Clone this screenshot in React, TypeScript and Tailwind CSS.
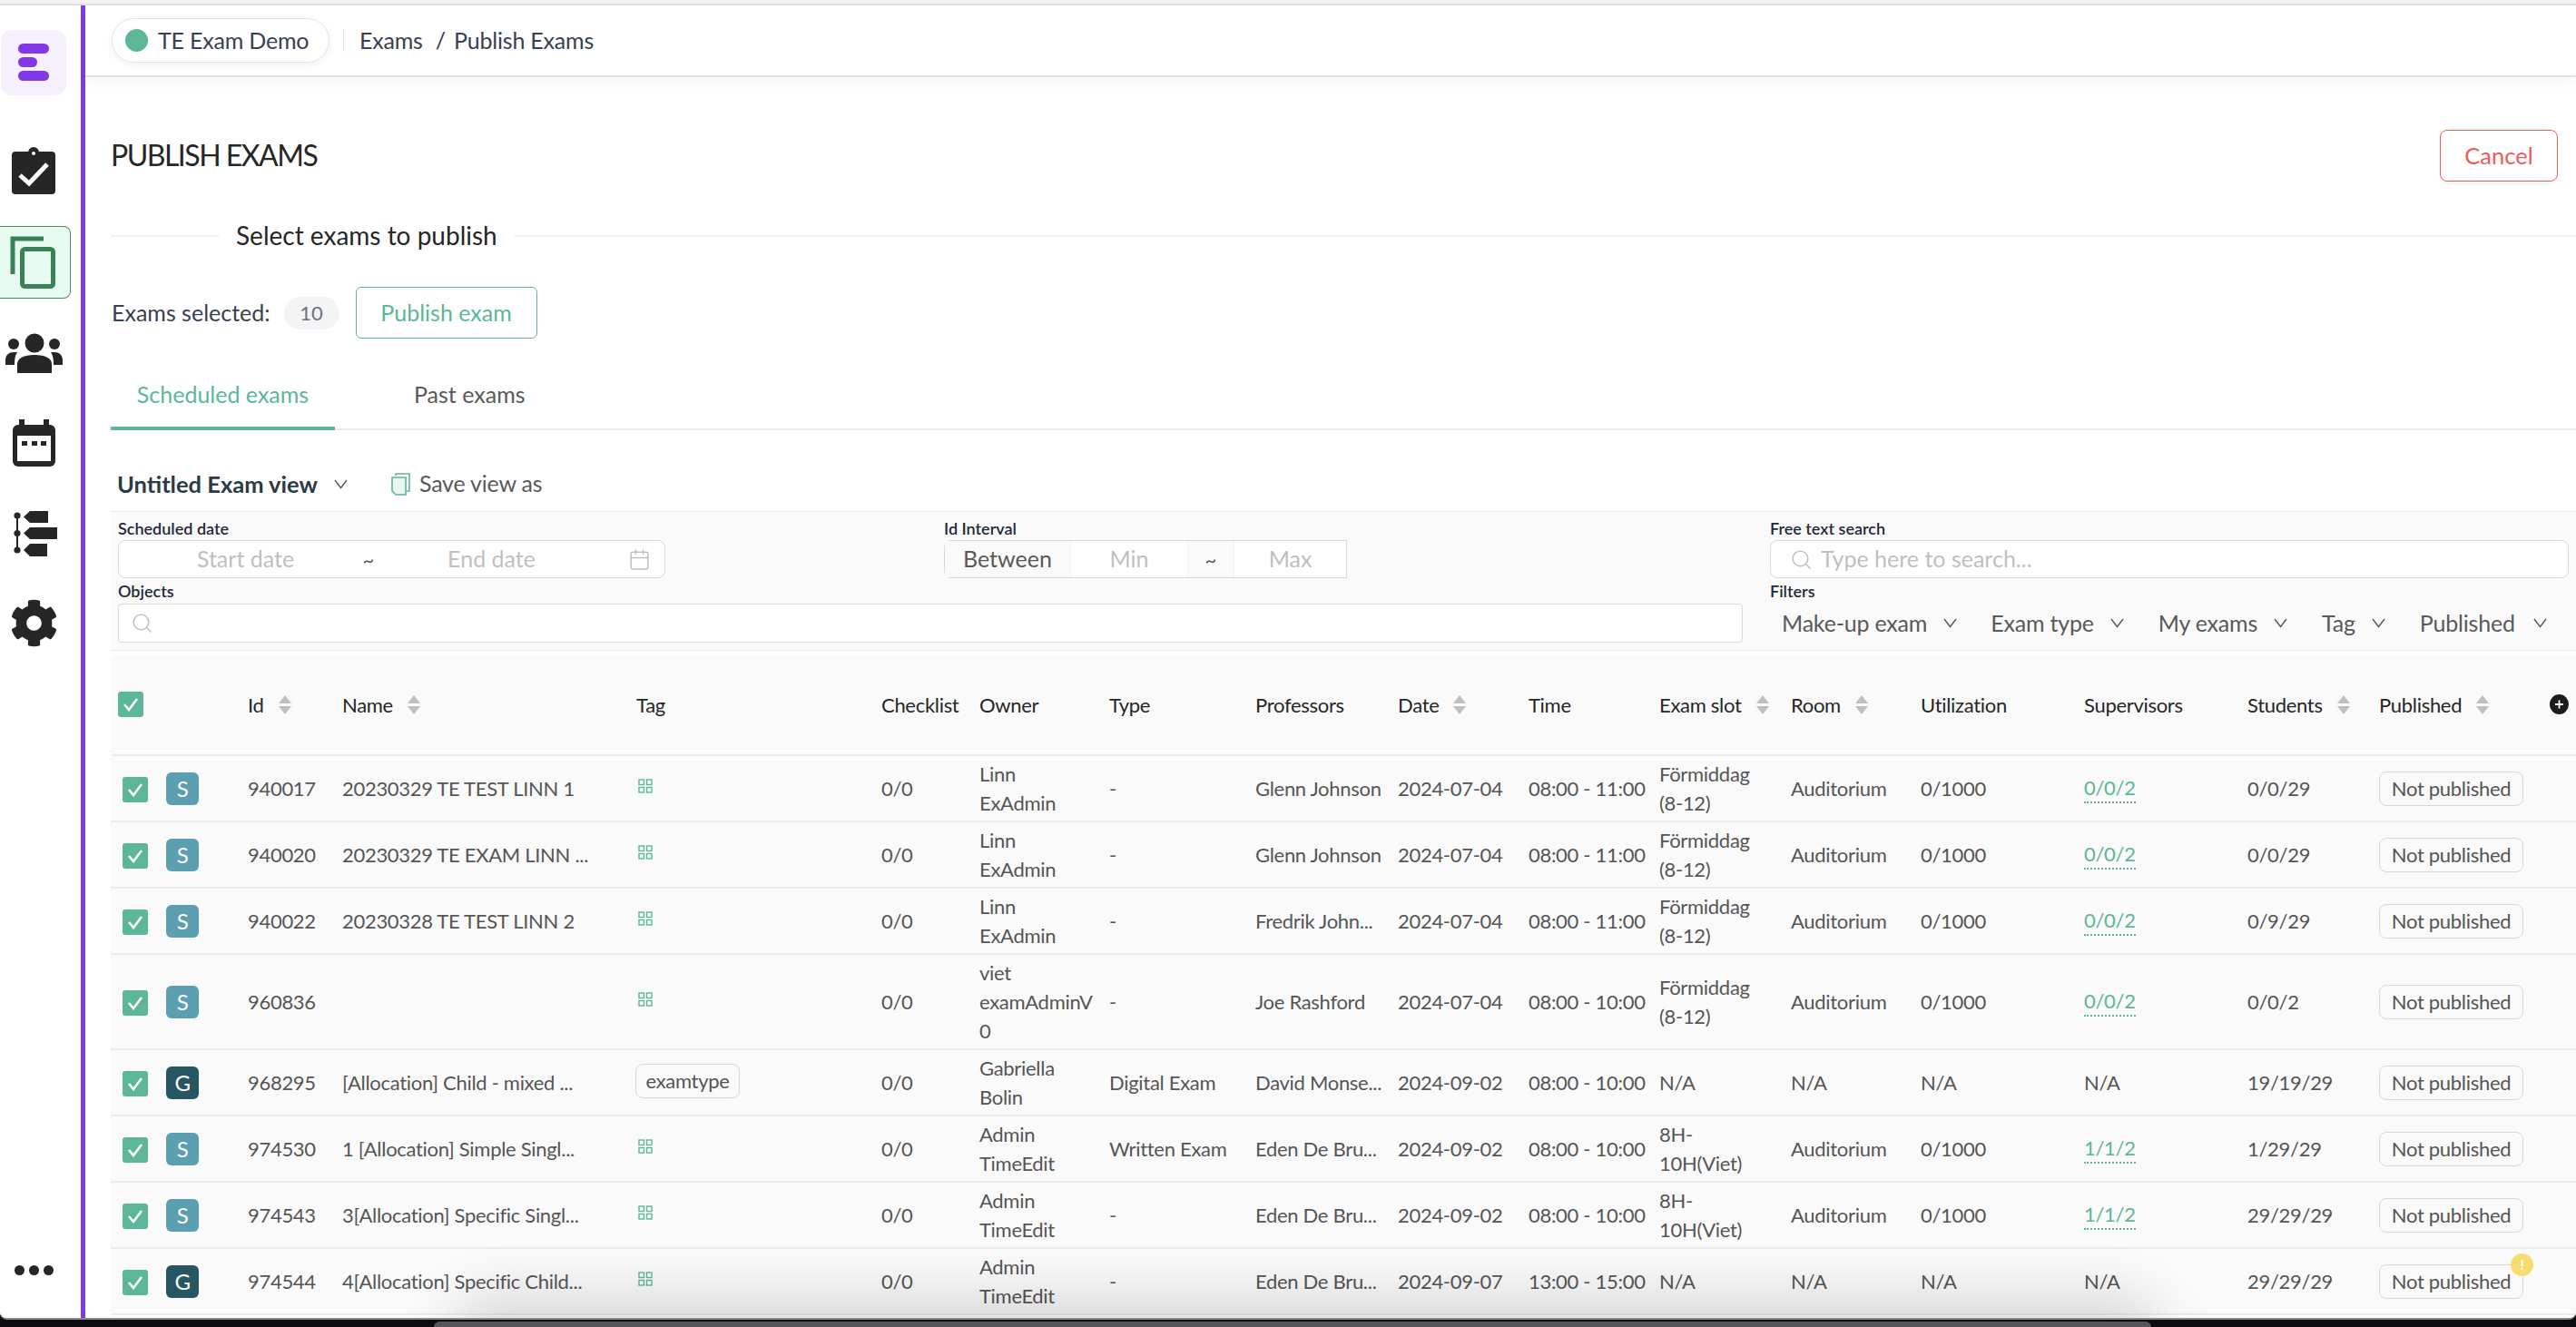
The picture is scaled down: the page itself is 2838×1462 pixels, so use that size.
import { Search, Calendar } from "lucide-react";
import { FaCog } from "react-icons/fa";

interface Exam {
  id: string;
  name: string;
  kind: "S" | "G";
  tag?: string;
  owner: string[];
  type: string;
  professor: string;
  date: string;
  time: string;
  slot: string[];
  room: string;
  utilization: string;
  supervisors: string;
  students: string;
  warning?: boolean;
  tall?: boolean;
}

const exams: Exam[] = [
  { id: "940017", name: "20230329 TE TEST LINN 1", kind: "S", owner: ["Linn", "ExAdmin"], type: "-", professor: "Glenn Johnson", date: "2024-07-04", time: "08:00 - 11:00", slot: ["Förmiddag", "(8-12)"], room: "Auditorium", utilization: "0/1000", supervisors: "0/0/2", students: "0/0/29" },
  { id: "940020", name: "20230329 TE EXAM LINN ...", kind: "S", owner: ["Linn", "ExAdmin"], type: "-", professor: "Glenn Johnson", date: "2024-07-04", time: "08:00 - 11:00", slot: ["Förmiddag", "(8-12)"], room: "Auditorium", utilization: "0/1000", supervisors: "0/0/2", students: "0/0/29" },
  { id: "940022", name: "20230328 TE TEST LINN 2", kind: "S", owner: ["Linn", "ExAdmin"], type: "-", professor: "Fredrik John...", date: "2024-07-04", time: "08:00 - 11:00", slot: ["Förmiddag", "(8-12)"], room: "Auditorium", utilization: "0/1000", supervisors: "0/0/2", students: "0/9/29" },
  { id: "960836", name: "", kind: "S", owner: ["viet", "examAdminV", "0"], type: "-", professor: "Joe Rashford", date: "2024-07-04", time: "08:00 - 10:00", slot: ["Förmiddag", "(8-12)"], room: "Auditorium", utilization: "0/1000", supervisors: "0/0/2", students: "0/0/2", tall: true },
  { id: "968295", name: "[Allocation] Child - mixed ...", kind: "G", tag: "examtype", owner: ["Gabriella", "Bolin"], type: "Digital Exam", professor: "David Monse...", date: "2024-09-02", time: "08:00 - 10:00", slot: ["N/A"], room: "N/A", utilization: "N/A", supervisors: "N/A", students: "19/19/29" },
  { id: "974530", name: "1 [Allocation] Simple Singl...", kind: "S", owner: ["Admin", "TimeEdit"], type: "Written Exam", professor: "Eden De Bru...", date: "2024-09-02", time: "08:00 - 10:00", slot: ["8H-", "10H(Viet)"], room: "Auditorium", utilization: "0/1000", supervisors: "1/1/2", students: "1/29/29" },
  { id: "974543", name: "3[Allocation] Specific Singl...", kind: "S", owner: ["Admin", "TimeEdit"], type: "-", professor: "Eden De Bru...", date: "2024-09-02", time: "08:00 - 10:00", slot: ["8H-", "10H(Viet)"], room: "Auditorium", utilization: "0/1000", supervisors: "1/1/2", students: "29/29/29" },
  { id: "974544", name: "4[Allocation] Specific Child...", kind: "G", owner: ["Admin", "TimeEdit"], type: "-", professor: "Eden De Bru...", date: "2024-09-07", time: "13:00 - 15:00", slot: ["N/A"], room: "N/A", utilization: "N/A", supervisors: "N/A", students: "29/29/29", warning: true },
];

const columns: { label: string; sort?: boolean }[] = [
  { label: "Id", sort: true },
  { label: "Name", sort: true },
  { label: "Tag" },
  { label: "Checklist" },
  { label: "Owner" },
  { label: "Type" },
  { label: "Professors" },
  { label: "Date", sort: true },
  { label: "Time" },
  { label: "Exam slot", sort: true },
  { label: "Room", sort: true },
  { label: "Utilization" },
  { label: "Supervisors" },
  { label: "Students", sort: true },
  { label: "Published", sort: true },
];

const widths = ["w-[55px]", "w-[88px]", "w-[104px]", "w-[324px]", "w-[270px]", "w-[108px]", "w-[143px]", "w-[161px]", "w-[157px]", "w-[144px]", "w-[144px]", "w-[145px]", "w-[143px]", "w-[180px]", "w-[180px]", "w-[145px]", "w-auto"];

const Chevron = () => (
  <svg width="15" height="11" viewBox="0 0 15 11" fill="none" stroke="#595959" strokeWidth="1.4">
    <path d="M1 1l6.5 8.5L14 1" />
  </svg>
);

const Sorter = () => (
  <svg width="14" height="21" viewBox="0 0 14 21" fill="#bfbfbf" className="shrink-0">
    <path d="M7 0l7 9H0z" />
    <path d="M7 21l7-9H0z" />
  </svg>
);

const CheckBox = ({ className }: { className: string }) => (
  <span className={`flex h-[28px] w-[28px] items-center justify-center rounded-[3px] bg-[#5bb795] ${className}`}>
    <svg width="18" height="16" viewBox="0 0 18 16" fill="none" stroke="#fff" strokeWidth="2.6">
      <path d="M2 8l5 6L16 2" />
    </svg>
  </span>
);

const TagIcon = () => (
  <svg width="16" height="16" viewBox="0 0 16 16" fill="none" stroke="#5bb795" strokeWidth="1.4" className="-mt-[6px] ml-[2px]">
    <rect x="1" y="1" width="5.5" height="5.5" />
    <rect x="9.5" y="1" width="5.5" height="5.5" />
    <rect x="1" y="9.5" width="5.5" height="5.5" />
    <rect x="9.5" y="9.5" width="5.5" height="5.5" />
  </svg>
);

const AddColumn = () => (
  <svg width="21" height="22" viewBox="0 0 21 22" className="ml-auto shrink-0">
    <ellipse cx="10.5" cy="11" rx="10.5" ry="11" fill="#1c1c1c" />
    <path d="M10.5 6.5v9M6 11h9" stroke="#fff" strokeWidth="1.8" />
  </svg>
);

const Sidebar = () => (
  <aside className="flex h-full w-[94px] shrink-0 flex-col border-r-[5px] border-[#8338e8] bg-white">
    <div className="ml-[1px] mt-[27px] flex h-[72px] w-[72px] flex-col gap-[4px] rounded-[12px] bg-[#f6f0fe] pl-[19px] pt-[15px]">
      <span className="h-[11px] w-[34px] rounded-full bg-[#8338e8]" />
      <span className="h-[11px] w-[21px] rounded-full bg-[#8338e8]" />
      <span className="h-[11px] w-[34px] rounded-full bg-[#8338e8]" />
    </div>

    <svg width="48" height="52" viewBox="0 0 48 52" className="ml-[13px] mt-[57px]">
      <rect x="0" y="5" width="48" height="47" rx="4" fill="#262626" />
      <circle cx="24" cy="6" r="6" fill="#262626" />
      <circle cx="24" cy="7" r="2" fill="#fff" />
      <path d="M9 31l10 9 20-21" fill="none" stroke="#fff" strokeWidth="5" />
    </svg>

    <div className="mt-[35px] flex h-[80px] w-[78px] items-center rounded-r-[8px] border border-l-0 border-[#4a8c64] bg-[#e6fcf1] pl-[11px]">
      <svg width="50" height="58" viewBox="0 0 50 58" fill="none" stroke="#3b8158" strokeWidth="5">
        <path d="M37 3H3v39" />
        <rect x="13.5" y="14.5" width="34" height="41" rx="3" />
      </svg>
    </div>

    <svg width="63" height="44" viewBox="0 0 63 44" fill="#262626" className="ml-[6px] mt-[38px]">
      <circle cx="32" cy="11" r="10.5" />
      <circle cx="9" cy="12" r="6" />
      <circle cx="54" cy="12" r="6" />
      <path d="M13 44V34c0-6 7-10 19-10s19 4 19 10v10z" />
      <path d="M0 35v-5c0-6 4-9 9-9h4c-2 3-3 7-3 14z" />
      <path d="M63 35v-5c0-6-4-9-9-9h-4c2 3 3 7 3 14z" />
    </svg>

    <svg width="47" height="52" viewBox="0 0 47 52" className="ml-[14px] mt-[51px]">
      <rect x="0" y="6" width="47" height="46" rx="6" fill="#262626" />
      <rect x="7" y="0" width="6" height="9" fill="#262626" />
      <rect x="34" y="0" width="6" height="9" fill="#262626" />
      <rect x="5" y="18" width="37" height="28" fill="#fff" />
      <rect x="10" y="24" width="6" height="5" fill="#262626" />
      <rect x="21" y="24" width="6" height="5" fill="#262626" />
      <rect x="31" y="24" width="6" height="5" fill="#262626" />
    </svg>

    <svg width="48" height="50" viewBox="0 0 48 50" fill="#262626" className="ml-[15px] mt-[49px]">
      <path d="M4 5v38" stroke="#262626" strokeWidth="2" />
      <circle cx="4" cy="5" r="3.6" />
      <circle cx="4" cy="24.5" r="3.6" />
      <circle cx="4" cy="43" r="3.6" />
      <path d="M11 6.5L18 0h20v13H18z" />
      <path d="M11 24.5L18 18h30v13H18z" />
      <path d="M11 43l7-7h19v14H18z" />
    </svg>

    <FaCog size={53} color="#262626" className="ml-[11px] mt-[47px]" />

    <div className="ml-[16px] mt-auto mb-[47px] flex gap-[5px]">
      <span className="h-[11px] w-[11px] rounded-full bg-[#262626]" />
      <span className="h-[11px] w-[11px] rounded-full bg-[#262626]" />
      <span className="h-[11px] w-[11px] rounded-full bg-[#262626]" />
    </div>
  </aside>
);

const FilterPanel = () => (
  <div className="mt-[12px] grid grid-cols-[880px_880px_880px] gap-x-[30px] border-y border-[#ebebeb] bg-[#fafafa] pb-[8px] pl-[8px] pt-[5px]">
    <div>
      <div className="flex h-[26px] items-center text-[18px] font-semibold text-[#1f2937]">Scheduled date</div>
      <div className="flex h-[42px] w-[603px] items-center rounded-[8px] border border-[#d9d9d9] bg-white pl-[20px] text-[25px] text-[#bfbfbf]">
        <span className="w-[239px] text-center">Start date</span>
        <span className="w-[32px] text-center text-[22px] text-[#595959]">~</span>
        <span className="w-[239px] text-center">End date</span>
        <Calendar size={25} strokeWidth={1.4} className="ml-[31px]" />
      </div>
    </div>
    <div>
      <div className="flex h-[26px] items-center text-[18px] font-semibold text-[#1f2937]">Id Interval</div>
      <div className="flex h-[42px] w-[444px] items-center rounded-l-[8px] border border-[#d9d9d9] bg-white text-[25px] text-[#bfbfbf]">
        <span className="flex h-full w-[139px] items-center border-r border-[#f2f2f2] bg-[#fafafa] pl-[20px] text-[#595959]">Between</span>
        <span className="flex h-full w-[128px] items-center justify-center">Min</span>
        <span className="flex h-full w-[52px] items-center justify-center border-x border-[#f2f2f2] bg-[#fafafa] text-[22px] text-[#595959]">~</span>
        <span className="flex h-full flex-1 items-center justify-center">Max</span>
      </div>
    </div>
    <div>
      <div className="flex h-[26px] items-center text-[18px] font-semibold text-[#1f2937]">Free text search</div>
      <div className="flex h-[42px] items-center gap-[9px] rounded-[8px] border border-[#d9d9d9] bg-white pl-[21px] text-[25px] text-[#bfbfbf]">
        <Search size={25} strokeWidth={1.4} />
        <span>Type here to search...</span>
      </div>
    </div>
    <div className="col-span-2">
      <div className="flex h-[28px] items-center text-[18px] font-semibold text-[#1f2937]">Objects</div>
      <div className="flex h-[43px] items-center rounded-[4px] border border-[#d9d9d9] bg-white pl-[13px] text-[#bfbfbf]">
        <Search size={25} strokeWidth={1.4} />
      </div>
    </div>
    <div>
      <div className="flex h-[28px] items-center text-[18px] font-semibold text-[#1f2937]">Filters</div>
      <div className="flex h-[43px] items-center whitespace-nowrap pl-[13px] text-[25px] tracking-[-0.2px] text-[#595959]">
        <span>Make-up exam</span>
        <span className="ml-[18px] mr-[37px]"><Chevron /></span>
        <span>Exam type</span>
        <span className="ml-[18px] mr-[38px]"><Chevron /></span>
        <span>My exams</span>
        <span className="ml-[18px] mr-[38px]"><Chevron /></span>
        <span>Tag</span>
        <span className="ml-[18px] mr-[38px]"><Chevron /></span>
        <span>Published</span>
        <span className="ml-[20px]"><Chevron /></span>
      </div>
    </div>
  </div>
);

const ExamTable = () => (
  <table className="mt-[4px] w-full table-fixed border-collapse text-[22px] tracking-[-0.3px] text-[#555555]">
    <colgroup>
      {widths.map((w, i) => (
        <col key={i} className={w} />
      ))}
    </colgroup>
    <thead>
      <tr className="h-[111px] border-b-2 border-[#ececec] bg-[#fafafa] text-[#262626]">
        <th className="rounded-tl-[8px] pl-[8px] text-left font-normal">
          <CheckBox className="" />
        </th>
        <th />
        {columns.map((c) => (
          <th key={c.label} className="whitespace-nowrap px-[8px] text-left font-normal">
            <span className="flex items-center gap-[16px]">
              {c.label}
              {c.sort && <Sorter />}
              {c.label === "Published" && <AddColumn />}
            </span>
          </th>
        ))}
      </tr>
    </thead>
    <tbody>
      {exams.map((e) => (
        <tr key={e.id} className={`border-b-2 border-[#ececec] bg-[#fafafa] leading-[32px] ${e.tall ? "h-[105px]" : "h-[73px]"}`}>
          <td className="pl-[13px]">
            <CheckBox className="mt-[2px]" />
          </td>
          <td className="pl-[6px]">
            <span className={`flex h-[36px] w-[36px] items-center justify-center rounded-[6px] text-[24px] text-white ${e.kind === "S" ? "bg-[#5b9fb1]" : "bg-[#265661]"}`}>
              {e.kind}
            </span>
          </td>
          <td className="px-[8px]">{e.id}</td>
          <td className="whitespace-nowrap px-[8px]">{e.name}</td>
          <td className="px-[8px]">
            {e.tag ? (
              <span className="-ml-[1px] -mt-[4px] flex h-[38px] w-[115px] items-center justify-center rounded-[8px] border border-[#d9d9d9]">
                {e.tag}
              </span>
            ) : (
              <TagIcon />
            )}
          </td>
          <td className="px-[8px]">0/0</td>
          <td className="px-[8px]">
            {e.owner.map((o) => (
              <div key={o}>{o}</div>
            ))}
          </td>
          <td className="whitespace-nowrap px-[8px]">{e.type}</td>
          <td className="whitespace-nowrap px-[8px]">{e.professor}</td>
          <td className="whitespace-nowrap px-[8px]">{e.date}</td>
          <td className="whitespace-nowrap px-[8px]">{e.time}</td>
          <td className="whitespace-nowrap px-[8px]">
            {e.slot.map((s) => (
              <div key={s}>{s}</div>
            ))}
          </td>
          <td className="px-[8px]">{e.room}</td>
          <td className="px-[8px]">{e.utilization}</td>
          <td className="px-[8px]">
            {e.supervisors === "N/A" ? (
              e.supervisors
            ) : (
              <span className="inline-block border-b-2 border-dotted border-[#5bb795] pb-[1px] leading-[28px] text-[#5bb795]">
                {e.supervisors}
              </span>
            )}
          </td>
          <td className="px-[8px]">{e.students}</td>
          <td className="px-[8px]">
            <span className="relative flex h-[38px] w-[159px] items-center justify-center rounded-[8px] border border-[#d9d9d9]">
              Not published
              {e.warning && (
                <span className="absolute -right-[12px] -top-[13px] flex h-[25px] w-[25px] items-center justify-center rounded-full bg-[#f9dc6f] text-[16px] font-bold leading-none text-white">
                  !
                </span>
              )}
            </span>
          </td>
        </tr>
      ))}
      <tr className="h-[40px] bg-white">
        <td colSpan={17} />
      </tr>
    </tbody>
  </table>
);

export default function App() {
  return (
    <div className="h-[1462px] w-[2838px] overflow-hidden bg-[#0c0c10] font-['Lato',sans-serif]">
      <div className="h-[6px] border-b-2 border-[#e0e0e0] bg-[#f6f3f4]" />
      <div className="relative flex h-[1448px] overflow-hidden rounded-b-[8px] border-b-2 border-[#8a8a8a] bg-white">
        <Sidebar />
        <main className="min-w-0 flex-1">
          <header className="flex h-[79px] items-center border-b-2 border-[#dde2e8] pl-[29px] shadow-[0_6px_14px_rgba(0,0,0,0.04)]">
            <div className="flex h-[49px] w-[240px] items-center gap-[11px] rounded-full border border-[#dfe3e8] pl-[14px] text-[25px] tracking-[-0.2px] text-[#374151] shadow-[0_3px_8px_rgba(0,0,0,0.06)]">
              <span className="h-[25px] w-[25px] rounded-full bg-[#5bb795]" />
              TE Exam Demo
            </div>
            <span className="ml-[15px] h-[24px] w-[1px] bg-[#dfe3e8]" />
            <span className="ml-[17px] text-[25px] tracking-[-0.2px] text-[#374151]">Exams</span>
            <span className="ml-[14px] text-[25px] text-[#374151]">/</span>
            <span className="ml-[9px] text-[25px] tracking-[-0.2px] text-[#374151]">Publish Exams</span>
          </header>

          <div className="pl-[28px]">
            <div className="mt-[58px] flex h-[57px] items-center justify-between pr-[20px]">
              <h1 className="-mt-[2px] text-[32px] font-normal tracking-[-1.5px] text-[#262626]">PUBLISH EXAMS</h1>
              <button className="flex h-[57px] w-[130px] items-center justify-center rounded-[8px] border border-[#ef5a5a] text-[25.5px] text-[#ef5a5a] shadow-[0_4px_0_rgba(0,0,0,0.03)]">
                Cancel
              </button>
            </div>

            <div className="mt-[35px] flex h-[50px] items-center">
              <span className="h-[2px] w-[119px] bg-[#f0f0f0]" />
              <span className="-mt-[2px] px-[19px] text-[28px] text-[#262626]">Select exams to publish</span>
              <span className="h-[2px] flex-1 bg-[#f0f0f0]" />
            </div>

            <div className="mt-[31px] flex h-[57px] items-center">
              <span className="ml-[1px] text-[25px] text-[#374151]">Exams selected:</span>
              <span className="ml-[15px] flex h-[36px] w-[61px] items-center justify-center rounded-full bg-[#f3f4f6] text-[22px] text-[#6b7280]">10</span>
              <button className="ml-[18px] flex h-[57px] w-[200px] items-center justify-center rounded-[6px] border border-[#5bb795] text-[25px] text-[#5bb795]">
                Publish exam
              </button>
            </div>

            <div className="relative mt-[37px] flex h-[64px] border-b-2 border-[#ebebeb]">
              <span className="-mb-[2px] flex h-[64px] w-[247px] items-start justify-center border-b-4 border-[#5bb795] pt-[6px] text-[25px] text-[#5bb795]">
                Scheduled exams
              </span>
              <span className="ml-[87px] pt-[6px] text-[25px] text-[#595959]">Past exams</span>
            </div>

            <div className="mt-[41px] flex h-[36px] items-center pl-[7px]">
              <span className="text-[25.5px] font-bold text-[#2b3a46]">Untitled Exam view</span>
              <span className="ml-[18px]"><Chevron /></span>
              <svg width="21" height="25" viewBox="0 0 21 25" fill="none" stroke="#5bb795" strokeWidth="1.6" className="ml-[48px]">
                <path d="M5 3V1h15v19h-3" />
                <path d="M1 5h15v19H5l-4-4z" fill="#e9f6f1" />
              </svg>
              <span className="ml-[10px] text-[25px] tracking-[-0.2px] text-[#595959]">Save view as</span>
            </div>

            <FilterPanel />
            <ExamTable />
          </div>
        </main>
        <div className="pointer-events-none absolute -bottom-[30px] left-[520px] right-[480px] h-[30px] rounded-t-[30px] bg-black shadow-[0_0_60px_28px_rgba(0,0,0,0.13)]" />
      </div>
      <div className="ml-[478px] mt-[2px] h-[6px] w-[1892px] rounded-t-[12px] bg-[#55555a]" />
    </div>
  );
}
